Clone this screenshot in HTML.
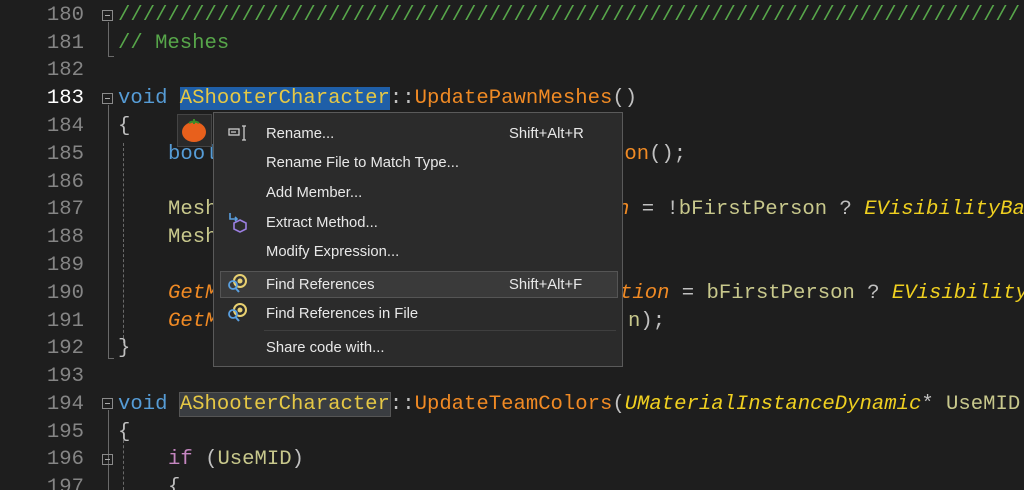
<!DOCTYPE html>
<html><head><meta charset="utf-8"><style>
html,body{margin:0;padding:0;}
body{width:1024px;height:490px;background:#1e1e1e;overflow:hidden;position:relative;font-family:"Liberation Mono",monospace;font-size:20.6px;}
#w{position:absolute;left:0;top:0;width:1024px;height:490px;overflow:hidden;}
.ln{position:absolute;left:0;width:84px;text-align:right;color:#858585;height:28px;line-height:28px;}
.c{position:absolute;white-space:pre;height:28px;line-height:28px;color:#dcdcdc;}
.kw{color:#569cd6}.cls{color:#e6c845}.fn{color:#f08a24}.var{color:#c8c88c}.cm{color:#57a64a}
.en{color:#f0d020;font-style:italic}.it{color:#f08a24;font-style:italic}.pu{color:#c0c0c0}.kp{color:#c586c0}
.box{position:absolute;width:11px;height:11px;border:1px solid #8a8a8a;box-sizing:border-box;}
.box:after{content:"";position:absolute;left:2px;right:2px;top:4px;height:1px;background:#aaa;}
.vl{position:absolute;width:1px;background:#6a6a6a;}
.dl{position:absolute;width:0;border-left:1px dashed #6a6a6a;}
.menu{position:absolute;left:213px;top:112px;width:410px;height:255px;background:#2b2b2b;border:1px solid #5a5a5a;box-sizing:border-box;font-family:"Liberation Sans",sans-serif;font-size:14.8px;color:#e8e8e8;}
.mi{position:absolute;left:52px;height:20px;line-height:20px;}
.sc{position:absolute;left:295px;height:20px;line-height:20px;}
</style></head><body><div id="w">
<div class="ln" style="top:2px">180</div>
<div class="ln" style="top:30px">181</div>
<div class="ln" style="top:57px">182</div>
<div class="ln" style="top:85px;color:#fff">183</div>
<div class="ln" style="top:113px">184</div>
<div class="ln" style="top:141px">185</div>
<div class="ln" style="top:169px">186</div>
<div class="ln" style="top:196px">187</div>
<div class="ln" style="top:224px">188</div>
<div class="ln" style="top:252px">189</div>
<div class="ln" style="top:280px">190</div>
<div class="ln" style="top:308px">191</div>
<div class="ln" style="top:335px">192</div>
<div class="ln" style="top:363px">193</div>
<div class="ln" style="top:391px">194</div>
<div class="ln" style="top:419px">195</div>
<div class="ln" style="top:446px">196</div>
<div class="ln" style="top:474px">197</div>

<div class="box" style="left:102px;top:10px"></div>
<div class="vl" style="left:108px;top:22px;height:34px"></div>
<div class="vl" style="left:108px;top:56px;width:6px;height:1px"></div>
<div class="box" style="left:102px;top:93px"></div>
<div class="vl" style="left:108px;top:105px;height:253px"></div>
<div class="vl" style="left:108px;top:358px;width:6px;height:1px"></div>
<div class="dl" style="left:123px;top:143px;height:200px"></div>
<div class="box" style="left:102px;top:398px"></div>
<div class="vl" style="left:108px;top:410px;height:80px"></div>
<div class="box" style="left:102px;top:454px"></div>
<div class="dl" style="left:123px;top:440px;height:50px"></div>

<div class="c cm" style="left:118px;top:2px">/////////////////////////////////////////////////////////////////////////</div>
<div class="c cm" style="left:118px;top:30px">// Meshes</div>
<div class="c" style="left:118px;top:85px"><span class="kw">void</span> <span class="cls" style="background:#1f5fa8">AShooterCharacter</span><span class="pu">::</span><span class="fn">UpdatePawnMeshes</span><span class="pu">()</span></div>
<div class="c pu" style="left:118px;top:113px">{</div>
<div class="c" style="left:168px;top:141px"><span class="kw">bool</span></div>
<div class="c" style="left:612px;top:141px"><span class="fn">son</span><span class="pu">();</span></div>
<div class="c var" style="left:168px;top:196px">Mesh</div>
<div class="c" style="left:617px;top:196px"><span class="it">n</span> <span class="pu">=</span> <span class="pu">!</span><span class="var">bFirstPerson</span> <span class="pu">?</span> <span class="en">EVisibilityBas</span></div>
<div class="c var" style="left:168px;top:224px">Mesh</div>
<div class="c" style="left:168px;top:280px"><span class="it">GetM</span></div>
<div class="c" style="left:620px;top:280px"><span class="it">tion</span> <span class="pu">=</span> <span class="var">bFirstPerson</span> <span class="pu">?</span> <span class="en">EVisibility</span></div>
<div class="c" style="left:168px;top:308px"><span class="it">GetM</span></div>
<div class="c" style="left:628px;top:308px"><span class="var">n</span><span class="pu">);</span></div>
<div class="c pu" style="left:118px;top:335px">}</div>
<div class="c" style="left:118px;top:391px"><span class="kw">void</span> <span class="cls" style="background:#3a3d41;outline:1px solid #555">AShooterCharacter</span><span class="pu">::</span><span class="fn">UpdateTeamColors</span><span class="pu">(</span><span class="en">UMaterialInstanceDynamic</span><span class="pu">*</span> <span class="var">UseMID</span></div>
<div class="c pu" style="left:118px;top:419px">{</div>
<div class="c" style="left:168px;top:446px"><span class="kp">if</span> <span class="pu">(</span><span class="var">UseMID</span><span class="pu">)</span></div>
<div class="c pu" style="left:168px;top:474px">{</div>

<div style="position:absolute;left:177px;top:114px;width:35px;height:33px;background:#2a2a2a;border:1px solid #444;box-sizing:border-box"></div>
<svg style="position:absolute;left:180px;top:116px" width="28" height="28" viewBox="0 0 28 28"><ellipse cx="14" cy="16" rx="12" ry="10" fill="#e8601c"/><path d="M13 3 L15 3 L15 8 L13 8Z" fill="#3a8a2a"/><path d="M9 7 Q14 4 19 7" stroke="#3a8a2a" stroke-width="2" fill="none"/></svg>

<div class="menu">
<svg style="position:absolute;left:14px;top:12px" width="20" height="16" viewBox="0 0 20 16"><rect x="1" y="4" width="10" height="6" fill="none" stroke="#ccc" stroke-width="1.3"/><path d="M3 7h5M14 1h4M16 1v14M14 15h4" stroke="#ccc" stroke-width="1.3" fill="none"/></svg>
<div class="mi" style="top:11px">Rename...</div><div class="sc" style="top:11px">Shift+Alt+R</div>
<div class="mi" style="top:40px">Rename File to Match Type...</div>
<div class="mi" style="top:70px">Add Member...</div>
<svg style="position:absolute;left:13px;top:98px" width="22" height="22" viewBox="0 0 22 22"><path d="M3 2 L3 8 L10 8" stroke="#5aa0e0" stroke-width="1.6" fill="none"/><path d="M8 6 L10 8 L8 10" stroke="#5aa0e0" stroke-width="1.6" fill="none"/><path d="M13 9 L19 12 L19 18 L13 21 L7 18 L7 12Z" fill="none" stroke="#9b7fe0" stroke-width="1.6"/></svg>
<div class="mi" style="top:100px">Extract Method...</div>
<div class="mi" style="top:129px">Modify Expression...</div>
<div style="position:absolute;left:6px;top:158px;width:398px;height:27px;background:#3a3a3a;border:1px solid #555;box-sizing:border-box"></div>
<svg style="position:absolute;left:12px;top:160px" width="24" height="22" viewBox="0 0 24 22"><circle cx="14" cy="8" r="6" fill="none" stroke="#e8d070" stroke-width="2"/><circle cx="14" cy="8" r="2.5" fill="#e8d070"/><circle cx="7" cy="12" r="4" fill="none" stroke="#5aa0e0" stroke-width="1.8"/><path d="M9.5 15 L13 19" stroke="#5aa0e0" stroke-width="2"/></svg>
<div class="mi" style="top:162px">Find References</div><div class="sc" style="top:162px">Shift+Alt+F</div>
<svg style="position:absolute;left:12px;top:189px" width="24" height="22" viewBox="0 0 24 22"><circle cx="14" cy="8" r="6" fill="none" stroke="#e8d070" stroke-width="2"/><circle cx="14" cy="8" r="2.5" fill="#e8d070"/><circle cx="7" cy="12" r="4" fill="none" stroke="#5aa0e0" stroke-width="1.8"/><path d="M9.5 15 L13 19" stroke="#5aa0e0" stroke-width="2"/></svg>
<div class="mi" style="top:191px">Find References in File</div>
<div style="position:absolute;left:50px;right:6px;top:217px;height:1px;background:#3f3f3f"></div>
<div class="mi" style="top:225px">Share code with...</div>
</div>
</div></body></html>
